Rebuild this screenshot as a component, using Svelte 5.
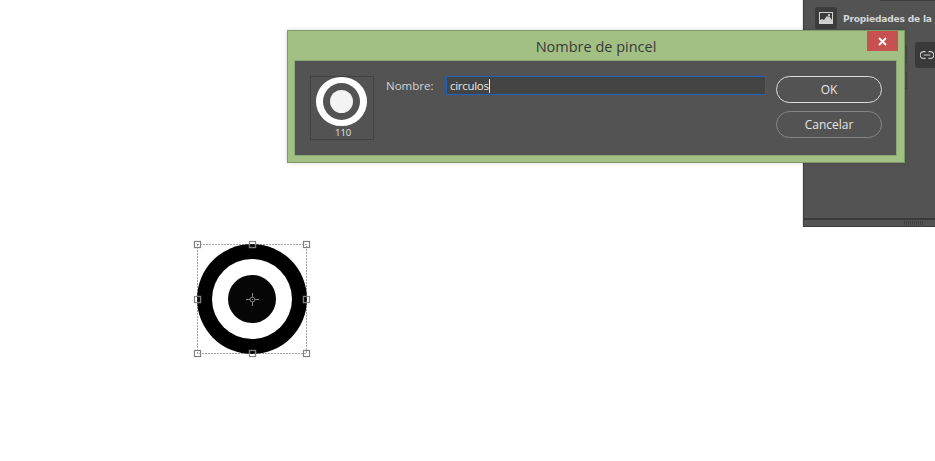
<script>
  const handles = [
    [0, 0], [55, 0], [109, 0],
    [0, 55], [109, 55],
    [0, 109], [55, 109], [109, 109]
  ];
</script>

<main class="canvas">
  <aside class="panel">
    <div class="top-strip"></div>
    <div class="panel-head">
      <div class="thumb">
        <svg width="14" height="12" viewBox="0 0 14 12"><path d="M0 0h14v12H0z" fill="#d4d4d4"/><path d="M1 1h12v10H1z" fill="#3c3c3c"/><path d="M1 11V8l2-1 2 1 3-4 1 1 1-1 3 4v3z" fill="#cfcfcf"/><circle cx="10" cy="3.2" r="1.1" fill="#cfcfcf"/></svg>
      </div>
      <span class="panel-title">Propiedades de la capa</span>
    </div>
    <div class="panel-ghost one"></div>
    <div class="link">
      <svg width="14" height="8" viewBox="0 0 14 8" fill="none" stroke="#d0d0d0" stroke-width="1.1"><path d="M5.5.6H3.6a3.4 3.4 0 0 0 0 6.8h1.9M8.5.6h1.9a3.4 3.4 0 0 1 0 6.8H8.5M3.6 4h6.8"/></svg>
    </div>
    <div class="panel-ghost two"></div>
    <div class="panel-foot"><span class="grip"></span></div>
  </aside>

  <section class="dialog">
    <header class="titlebar">
      <h1>Nombre de pincel</h1>
      <button class="close" aria-label="Cerrar">
        <svg width="9" height="9" viewBox="0 0 9 9"><path d="M1 1l7 7M8 1l-7 7" stroke="#fff" stroke-width="1.8"/></svg>
      </button>
    </header>
    <div class="body">
      <div class="preview">
        <div class="brush"><div class="brush-mid"><div class="brush-core"></div></div></div>
        <span class="size">110</span>
      </div>
      <label class="field">
        <span>Nombre:</span>
        <div class="input">circulos<i class="caret"></i></div>
      </label>
      <div class="actions">
        <button class="btn primary">OK</button>
        <button class="btn">Cancelar</button>
      </div>
    </div>
  </section>

  <div class="target">
    <div class="ring"><div class="hole"><div class="core"></div></div></div>
    <svg class="bounds" width="116" height="116" viewBox="0 0 116 116" fill="none">
      <rect x="3.5" y="3.5" width="109" height="109" stroke="#444" stroke-dasharray="1 2"/>
    </svg>
    {#each handles as [x, y]}
      <span class="handle" style="left:{x}px;top:{y}px"></span>
    {/each}
    <svg class="cross" width="13" height="13" viewBox="0 0 13 13" fill="none" stroke="#8a8a8a"><path d="M6.5 0v4M6.5 9v4M0 6.5h4M9 6.5h4"/><circle cx="6.5" cy="6.5" r="2.4"/><path d="M6 6h1v1H6z" fill="#8a8a8a" stroke="none"/></svg>
  </div>
</main>

<style>
  :global(body) { margin: 0; background: #fff; }
  .canvas {
    position: relative;
    width: 935px;
    height: 461px;
    overflow: hidden;
    background: #fff;
    font-family: "Open Sans", "Noto Sans", sans-serif;
  }

  .panel {
    position: absolute;
    left: 803px;
    top: 0;
    width: 132px;
    height: 227px;
    box-sizing: border-box;
    overflow: hidden;
    background: #535353;
    border-left: 1px solid #404040;
    border-bottom: 1px solid #3a3a3a;
    box-shadow: -1px 0 0 #e6e6e6;
  }
  .top-strip { position: absolute; left: 76px; right: 0; top: 0; height: 1px; background: #3a3a3a; }
  .panel-head { display: flex; align-items: center; gap: 6px; padding: 7px 0 0 11px; }
  .thumb {
    width: 22px; height: 22px; flex: none;
    display: flex; align-items: center; justify-content: center;
    background: #3c3c3c; border-radius: 3px;
  }
  .panel-title { font: bold 9.1px "DejaVu Sans", sans-serif; letter-spacing: -.2px; color: #d6d6d6; white-space: nowrap; margin-top: 1px; }
  .link {
    position: absolute; left: 111px; top: 42px;
    width: 30px; height: 26px;
    box-sizing: border-box;
    padding-left: 5px;
    display: flex; align-items: center;
    background: #3a3a3a; border-radius: 3px;
  }
  .panel-ghost { position: absolute; left: 97px; width: 5px; border: 1px solid #444; border-left: 0; }
  .panel-ghost.one { top: 46px; height: 15px; }
  .panel-ghost.two { top: 72px; height: 15px; }
  .panel-foot {
    position: absolute; left: 0; right: 0; bottom: 0; height: 6px;
    border-top: 2px solid #3a3a3a;
    display: flex; justify-content: flex-end; align-items: center;
    padding-right: 11px;
  }
  .grip {
    width: 20px; height: 4px;
    background: repeating-linear-gradient(90deg, #404040 0 1px, transparent 1px 2px);
  }

  .dialog {
    position: absolute;
    left: 287px;
    top: 30px;
    width: 618px;
    height: 133px;
    box-sizing: border-box;
    background: #a2c084;
    border: 1px solid #7c9a63;
    box-shadow: 0 0 4px rgba(0,0,0,.18);
    display: flex;
    flex-direction: column;
  }
  .titlebar { position: relative; height: 29px; flex: none; display: flex; align-items: center; justify-content: center; }
  .titlebar h1 { margin: 1px 0 0; font-weight: 400; font-size: 14.5px; color: #3a3a3a; }
  .close {
    position: absolute; right: 6px; top: 0;
    width: 31px; height: 20px;
    padding: 0; border: 0;
    background: #c75050;
    display: flex; align-items: center; justify-content: center;
  }
  .body {
    margin: 0 7px 6px 6px;
    flex: 1;
    display: flex;
    background: #535353;
    border: 1px solid #8da874;
    padding: 15px 14px 0 15px;
  }
  .preview {
    width: 64px; height: 64px; flex: none;
    box-sizing: border-box;
    border: 1px solid #414141;
    display: flex; flex-direction: column; align-items: flex-start;
  }
  .brush {
    width: 50.5px; height: 50.5px; margin-left: 5px;
    border-radius: 50%;
    background: #fff;
    display: flex; align-items: center; justify-content: center;
  }
  .brush-mid { width: 37px; height: 37px; border-radius: 50%; background: #535353; display: flex; align-items: center; justify-content: center; }
  .brush-core { width: 23px; height: 23px; border-radius: 50%; background: #f3f3f3; }
  .size { margin: 1.5px 0 0 24px; font: 9.5px "Open Sans", sans-serif; color: #e4e4e4; line-height: 12px; }

  .field { display: flex; align-items: flex-start; margin-left: 12px; }
  .field span { font-size: 11.5px; color: #d2d2d2; line-height: 20px; width: 60px; flex: none; }
  .input {
    width: 320px; height: 19px;
    box-sizing: border-box;
    background: #444;
    border: 1px solid #1f5fbf;
    font-size: 11.5px;
    line-height: 17px;
    color: #e6e6e6;
    padding-left: 3px;
    display: flex;
    letter-spacing: -.3px;
  }
  .caret { display: block; width: 1px; height: 14px; margin-top: 1.5px; background: #eee; }

  .actions { margin-left: 10px; display: flex; flex-direction: column; gap: 8px; }
  .btn {
    width: 106px; height: 27px;
    padding: 0;
    background: transparent;
    border: 1px solid #858585;
    border-radius: 13.5px;
    font: 12px "Open Sans", sans-serif;
    color: #e6e6e6;
  }
  .btn.primary { border-color: #dcdcdc; }

  .target { position: absolute; left: 194px; top: 241px; width: 116px; height: 116px; }
  .ring {
    position: absolute; left: 3px; top: 3px;
    width: 110px; height: 110px; border-radius: 50%;
    background: #000;
    display: flex; align-items: center; justify-content: center;
  }
  .hole { width: 80px; height: 80px; border-radius: 50%; background: #fff; display: flex; align-items: center; justify-content: center; }
  .core { width: 48px; height: 48px; border-radius: 50%; background: #060606; }
  .bounds { position: absolute; left: 0; top: 0; }
  .handle {
    position: absolute;
    width: 7px; height: 7px;
    box-sizing: border-box;
    border: 1px solid #808080;
    box-shadow: 0 0 1px #aaa, inset 0 0 1px #aaa;
  }
  .cross { position: absolute; left: 52px; top: 52px; }
</style>
